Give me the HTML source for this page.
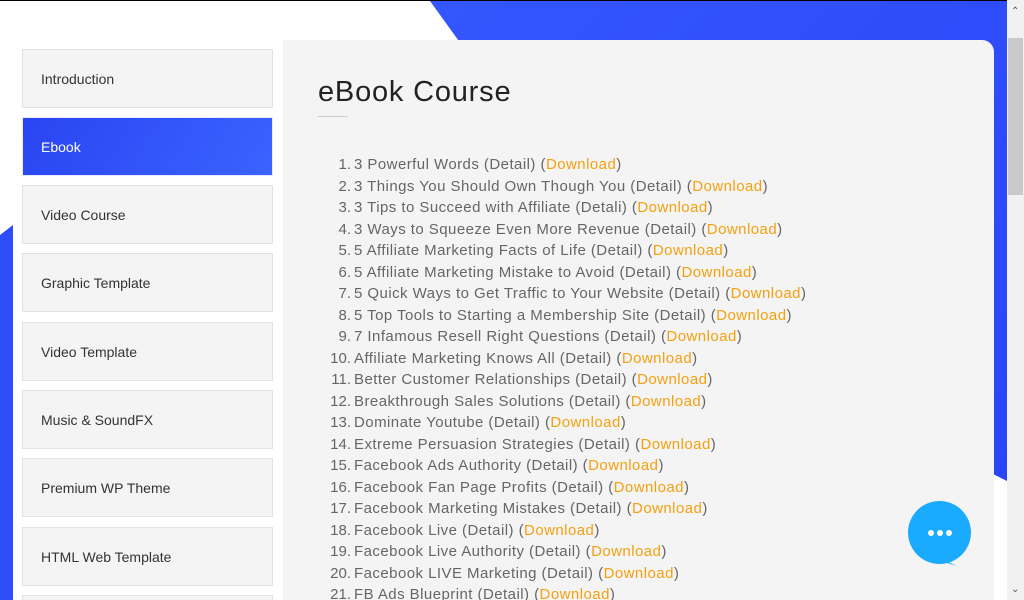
<!DOCTYPE html>
<html><head><meta charset="utf-8"><style>
*{margin:0;padding:0;box-sizing:border-box}
html,body{width:1024px;height:600px;overflow:hidden}
body{background:#fff;position:relative;font-family:"Liberation Sans",sans-serif}
.topline{position:absolute;left:0;top:0;width:1007px;height:1px;background:#000}
.blue{position:absolute;left:430px;top:1px;width:577px;height:480px;background:linear-gradient(135deg,#3356ff,#2a45f5);clip-path:polygon(0 0,100% 0,100% 100%,95% 97%,5% 40px,0 0)}
.blueL{position:absolute;left:0;top:225px;width:13px;height:375px;background:#2e4cf7;clip-path:polygon(0 10px,100% 0,100% 100%,0 100%)}
.card{position:absolute;left:13px;top:40px;width:981px;height:560px;background:#f4f4f4;border-radius:12px 12px 0 0;overflow:hidden}
.side{position:absolute;left:0;top:0;width:270px;height:100%;background:#fff}
.item{position:absolute;left:9px;width:251px;height:59px;background:#f4f4f4;border:1px solid #e2e2e2;font-size:14px;color:#333;padding-left:18px;line-height:59px}
.item.act{background:linear-gradient(120deg,#2a45f2,#3a63ff);color:#fff;border-color:#e8e8ff}
h1{position:absolute;left:305px;top:36px;font-family:"Liberation Sans",sans-serif;font-weight:normal;font-size:29px;color:#222;letter-spacing:0.8px}
.ul{position:absolute;left:305px;top:76px;width:30px;height:1px;background:#ccc}
ol{position:absolute;left:305px;top:114px;list-style:none;font-size:15px;color:#666;letter-spacing:0.45px}
li{height:21.5px;line-height:21.5px;white-space:nowrap}
li span.n{display:inline-block;width:33px;text-align:right;margin-right:3px;letter-spacing:0}
a{color:#f5a00f;text-decoration:none}
.sb{position:absolute;left:1007px;top:0;width:17px;height:600px;background:#f1f1f1}
.thumb{position:absolute;left:1008px;top:38px;width:15px;height:157px;background:#c9c9c9}
.chat{position:absolute;left:908px;top:501px;width:63px;height:63px;border-radius:50%;background:#1aabff}
.tail{position:absolute;left:935px;top:556px;width:22px;height:10px;background:#1aabff;clip-path:polygon(0 0,100% 100%,40% 60%)}
.dot{position:absolute;top:29px;width:6px;height:6px;border-radius:50%;background:#fff}
</style></head><body>
<div class="topline"></div>
<div class="blue"></div>
<div class="blueL"></div>
<div class="card">
<div class="side">
<div class="item" style="top:9px">Introduction</div>
<div class="item act" style="top:77px">Ebook</div>
<div class="item" style="top:145px">Video Course</div>
<div class="item" style="top:213px">Graphic Template</div>
<div class="item" style="top:282px">Video Template</div>
<div class="item" style="top:350px">Music &amp; SoundFX</div>
<div class="item" style="top:418px">Premium WP Theme</div>
<div class="item" style="top:487px">HTML Web Template</div>
<div class="item" style="top:555px"></div>
</div>
<h1>eBook Course</h1>
<div class="ul"></div>
<ol>
<li><span class="n">1.</span>3 Powerful Words (Detail) (<a>Download</a>)</li>
<li><span class="n">2.</span>3 Things You Should Own Though You (Detail) (<a>Download</a>)</li>
<li><span class="n">3.</span>3 Tips to Succeed with Affiliate (Detali) (<a>Download</a>)</li>
<li><span class="n">4.</span>3 Ways to Squeeze Even More Revenue (Detail) (<a>Download</a>)</li>
<li><span class="n">5.</span>5 Affiliate Marketing Facts of Life (Detail) (<a>Download</a>)</li>
<li><span class="n">6.</span>5 Affiliate Marketing Mistake to Avoid (Detail) (<a>Download</a>)</li>
<li><span class="n">7.</span>5 Quick Ways to Get Traffic to Your Website (Detail) (<a>Download</a>)</li>
<li><span class="n">8.</span>5 Top Tools to Starting a Membership Site (Detail) (<a>Download</a>)</li>
<li><span class="n">9.</span>7 Infamous Resell Right Questions (Detail) (<a>Download</a>)</li>
<li><span class="n">10.</span>Affiliate Marketing Knows All (Detail) (<a>Download</a>)</li>
<li><span class="n">11.</span>Better Customer Relationships (Detail) (<a>Download</a>)</li>
<li><span class="n">12.</span>Breakthrough Sales Solutions (Detail) (<a>Download</a>)</li>
<li><span class="n">13.</span>Dominate Youtube (Detail) (<a>Download</a>)</li>
<li><span class="n">14.</span>Extreme Persuasion Strategies (Detail) (<a>Download</a>)</li>
<li><span class="n">15.</span>Facebook Ads Authority (Detail) (<a>Download</a>)</li>
<li><span class="n">16.</span>Facebook Fan Page Profits (Detail) (<a>Download</a>)</li>
<li><span class="n">17.</span>Facebook Marketing Mistakes (Detail) (<a>Download</a>)</li>
<li><span class="n">18.</span>Facebook Live (Detail) (<a>Download</a>)</li>
<li><span class="n">19.</span>Facebook Live Authority (Detail) (<a>Download</a>)</li>
<li><span class="n">20.</span>Facebook LIVE Marketing (Detail) (<a>Download</a>)</li>
<li><span class="n">21.</span>FB Ads Blueprint (Detail) (<a>Download</a>)</li>
</ol>
</div>
<div class="sb"></div>
<div class="thumb"></div>
<div style="position:absolute;left:1011px;top:6px;font-size:10px;color:#555">&#8963;</div>
<div style="position:absolute;left:1011px;top:584px;font-size:10px;color:#555">&#8964;</div>
<div class="tail"></div>
<div class="chat"><div class="dot" style="left:20px"></div><div class="dot" style="left:29px"></div><div class="dot" style="left:38px"></div></div>
</body></html>
